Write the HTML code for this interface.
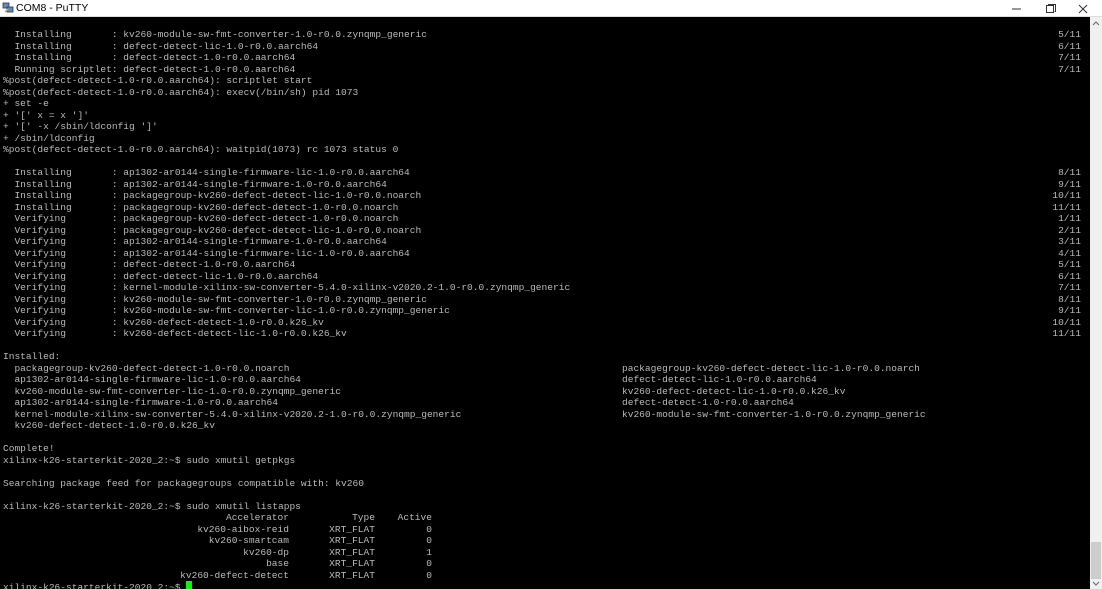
<!DOCTYPE html>
<html><head><meta charset="utf-8"><style>
*{margin:0;padding:0;box-sizing:border-box}
body{width:1102px;height:589px;overflow:hidden;background:#fff;position:relative;font-family:"Liberation Sans",sans-serif}
#title{position:absolute;left:0;top:0;width:1102px;height:17px;background:#fff;border-bottom:1px solid #ddd}
#title .t{position:absolute;left:16px;top:2px;font-size:10.5px;color:#000}
#term{position:absolute;left:0;top:17px;width:1090px;height:572px;background:#000;overflow:hidden}
#lines{position:absolute;left:3px;top:0.5px;width:1078px;font-family:"Liberation Mono",monospace;font-size:9.55px;color:#bbbbbb}
.l{height:11.5px;line-height:11.5px;white-space:pre;position:relative}
.r{position:absolute;right:0;top:0}
.c2{position:absolute;left:619px;top:0}
.a{display:inline-block;text-align:right}
.w1{width:286px}.w2{width:86px}.w3{width:57px}
#sb{position:absolute;left:1090px;top:17px;width:12px;height:572px;background:#f0f0f0}
</style></head><body>
<div id="title">
<svg style="position:absolute;left:2px;top:2px" width="12" height="12" viewBox="0 0 12 12"><rect x="1" y="1" width="6" height="5" fill="#5a8ad0" stroke="#333" stroke-width=".8"/><rect x="5" y="5" width="6" height="5" fill="#5a8ad0" stroke="#333" stroke-width=".8"/><path d="M3 10 L6 7" stroke="#d9b000" stroke-width="1.5"/></svg>
<div class="t">COM8 - PuTTY</div>
<svg style="position:absolute;left:1012px;top:4px" width="80" height="10"><path d="M0 5h9" stroke="#333"/><rect x="34.5" y="1.5" width="7" height="7" fill="none" stroke="#333"/><path d="M36.5 1.5v-1h7v7h-1" fill="none" stroke="#333"/><path d="M67 1l8 8M75 1l-8 8" stroke="#333"/></svg>
</div>
<div id="term"><div id="lines">
<div class="l"> </div>
<div class="l">  Installing       : kv260-module-sw-fmt-converter-1.0-r0.0.zynqmp_generic<span class="r">5/11</span></div>
<div class="l">  Installing       : defect-detect-lic-1.0-r0.0.aarch64<span class="r">6/11</span></div>
<div class="l">  Installing       : defect-detect-1.0-r0.0.aarch64<span class="r">7/11</span></div>
<div class="l">  Running scriptlet: defect-detect-1.0-r0.0.aarch64<span class="r">7/11</span></div>
<div class="l">%post(defect-detect-1.0-r0.0.aarch64): scriptlet start</div>
<div class="l">%post(defect-detect-1.0-r0.0.aarch64): execv(/bin/sh) pid 1073</div>
<div class="l">+ set -e</div>
<div class="l">+ '[' x = x ']'</div>
<div class="l">+ '[' -x /sbin/ldconfig ']'</div>
<div class="l">+ /sbin/ldconfig</div>
<div class="l">%post(defect-detect-1.0-r0.0.aarch64): waitpid(1073) rc 1073 status 0</div>
<div class="l"> </div>
<div class="l">  Installing       : ap1302-ar0144-single-firmware-lic-1.0-r0.0.aarch64<span class="r">8/11</span></div>
<div class="l">  Installing       : ap1302-ar0144-single-firmware-1.0-r0.0.aarch64<span class="r">9/11</span></div>
<div class="l">  Installing       : packagegroup-kv260-defect-detect-lic-1.0-r0.0.noarch<span class="r">10/11</span></div>
<div class="l">  Installing       : packagegroup-kv260-defect-detect-1.0-r0.0.noarch<span class="r">11/11</span></div>
<div class="l">  Verifying        : packagegroup-kv260-defect-detect-1.0-r0.0.noarch<span class="r">1/11</span></div>
<div class="l">  Verifying        : packagegroup-kv260-defect-detect-lic-1.0-r0.0.noarch<span class="r">2/11</span></div>
<div class="l">  Verifying        : ap1302-ar0144-single-firmware-1.0-r0.0.aarch64<span class="r">3/11</span></div>
<div class="l">  Verifying        : ap1302-ar0144-single-firmware-lic-1.0-r0.0.aarch64<span class="r">4/11</span></div>
<div class="l">  Verifying        : defect-detect-1.0-r0.0.aarch64<span class="r">5/11</span></div>
<div class="l">  Verifying        : defect-detect-lic-1.0-r0.0.aarch64<span class="r">6/11</span></div>
<div class="l">  Verifying        : kernel-module-xilinx-sw-converter-5.4.0-xilinx-v2020.2-1.0-r0.0.zynqmp_generic<span class="r">7/11</span></div>
<div class="l">  Verifying        : kv260-module-sw-fmt-converter-1.0-r0.0.zynqmp_generic<span class="r">8/11</span></div>
<div class="l">  Verifying        : kv260-module-sw-fmt-converter-lic-1.0-r0.0.zynqmp_generic<span class="r">9/11</span></div>
<div class="l">  Verifying        : kv260-defect-detect-1.0-r0.0.k26_kv<span class="r">10/11</span></div>
<div class="l">  Verifying        : kv260-defect-detect-lic-1.0-r0.0.k26_kv<span class="r">11/11</span></div>
<div class="l"> </div>
<div class="l">Installed:</div>
<div class="l">  packagegroup-kv260-defect-detect-1.0-r0.0.noarch<span class="c2">packagegroup-kv260-defect-detect-lic-1.0-r0.0.noarch</span></div>
<div class="l">  ap1302-ar0144-single-firmware-lic-1.0-r0.0.aarch64<span class="c2">defect-detect-lic-1.0-r0.0.aarch64</span></div>
<div class="l">  kv260-module-sw-fmt-converter-lic-1.0-r0.0.zynqmp_generic<span class="c2">kv260-defect-detect-lic-1.0-r0.0.k26_kv</span></div>
<div class="l">  ap1302-ar0144-single-firmware-1.0-r0.0.aarch64<span class="c2">defect-detect-1.0-r0.0.aarch64</span></div>
<div class="l">  kernel-module-xilinx-sw-converter-5.4.0-xilinx-v2020.2-1.0-r0.0.zynqmp_generic<span class="c2">kv260-module-sw-fmt-converter-1.0-r0.0.zynqmp_generic</span></div>
<div class="l">  kv260-defect-detect-1.0-r0.0.k26_kv</div>
<div class="l"> </div>
<div class="l">Complete!</div>
<div class="l">xilinx-k26-starterkit-2020_2:~$ sudo xmutil getpkgs</div>
<div class="l"> </div>
<div class="l">Searching package feed for packagegroups compatible with: kv260</div>
<div class="l"> </div>
<div class="l">xilinx-k26-starterkit-2020_2:~$ sudo xmutil listapps</div>
<div class="l"><span class="a w1">Accelerator</span><span class="a w2">Type</span><span class="a w3">Active</span></div>
<div class="l"><span class="a w1">kv260-aibox-reid</span><span class="a w2">XRT_FLAT</span><span class="a w3">0</span></div>
<div class="l"><span class="a w1">kv260-smartcam</span><span class="a w2">XRT_FLAT</span><span class="a w3">0</span></div>
<div class="l"><span class="a w1">kv260-dp</span><span class="a w2">XRT_FLAT</span><span class="a w3">1</span></div>
<div class="l"><span class="a w1">base</span><span class="a w2">XRT_FLAT</span><span class="a w3">0</span></div>
<div class="l"><span class="a w1">kv260-defect-detect</span><span class="a w2">XRT_FLAT</span><span class="a w3">0</span></div>
<div class="l">xilinx-k26-starterkit-2020_2:~$ <span style="display:inline-block;width:6px;height:10px;vertical-align:-1px;background:#00ff00"></span></div>
</div></div>
<div id="sb">
<svg style="position:absolute;left:2px;top:4px" width="8" height="6"><path d="M1 4l3-3 3 3" fill="none" stroke="#666"/></svg>
<div style="position:absolute;left:1px;top:525px;width:10px;height:37px;background:#cdcdcd"></div>
<svg style="position:absolute;left:2px;top:563px" width="8" height="6"><path d="M1 2l3 3 3-3" fill="none" stroke="#666"/></svg>
</div>
</body></html>
